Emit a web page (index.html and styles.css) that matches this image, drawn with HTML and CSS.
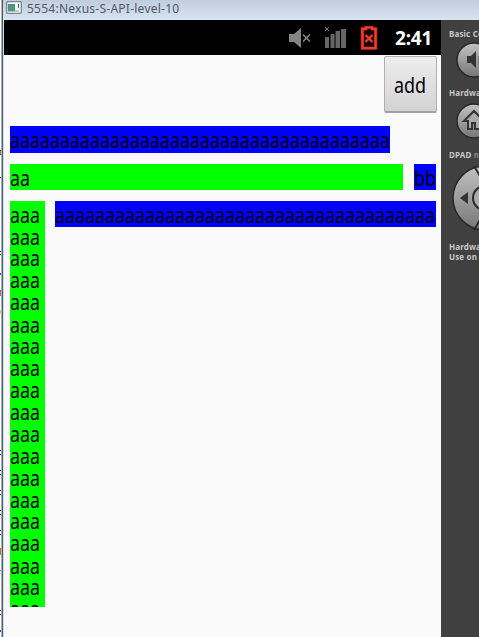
FILE: index.html
```html
<!DOCTYPE html>
<html lang="en"><head><meta charset="utf-8"><title>5554:Nexus-S-API-level-10</title><link rel="stylesheet" href="styles.css"></head>
<body>
<div class="desktop">
  <svg class="behind" width="2" height="637"><path stroke="#222" stroke-width="1" d="M0 177.500h1M0 251.500h1M0 254.500h1M0 450.500h1M0 454.500h1M0 470.500h1M0 474.500h1M0 490.500h1M0 494.500h1M0 510.500h1M0 514.500h1M0 530.500h1M0 534.500h1M0 610.500h1M0 614.500h1"/><path fill="#c87800" d="M0 151h1v4H0zM0 548h1v7H0z"/><path fill="#2459a8" d="M0 150h1v1H0zM0 154h1v1H0zM0 273h1v2H0zM0 630h1v2H0z"/><path fill="#a87068" d="M0 290h1v6H0zM0 570h1v1H0z"/><path fill="#eec56a" d="M0 310h1v4H0z"/><path fill="#a9b7c5" d="M1 0h1v637H1z"/></svg>
  <div class="window">
    <header class="titlebar">
      <svg width="16" height="13" viewBox="0 0 16 13"><rect x=".7" y=".7" width="14.600" height="11.600" rx="1" fill="#f8f8f5" stroke="#7b858c" stroke-width="1.300"/><rect x="2" y="3" width="7" height="7.500" fill="#4f9880"/><path d="M2 3h4L2 8z" fill="#5687a4"/><path d="M12.500 3v4" stroke="#286b67"/><path d="M9 10h4" stroke="#ccc" stroke-width="2"/></svg>
      <span class="title">5554:Nexus-S-API-level-10</span>
    </header>
    <div class="emulator">
      <main class="screen">
        <div class="status">
          <svg class="sound" width="24" height="22" viewBox="0 0 24 22"><path fill="#858585" d="M1 7h5l7-6v20l-7-6H1z"/><path d="M15 7.500l7 7m0-7l-7 7" stroke="#858585" stroke-width="1.700"/></svg>
          <svg class="signal" width="22" height="22" viewBox="0 0 22 22"><path fill="#666" d="M1 11h4v11H1zM6.500 8h4v14h-4zM11.500 5h4.500v17h-4.500zM17 3h5v19h-5z"/><path d="M1 1l4 4m0-4L1 5" stroke="#777"/></svg>
          <svg class="battery" width="18" height="24" viewBox="0 0 18 24"><path d="M6 3V1.500h6V3h3.500v19h-13V3z" fill="none" stroke="#6b170d" stroke-width="4"/><path d="M6 3V1.500h6V3h3.500v19h-13V3z" fill="#160300" stroke="#f23c25" stroke-width="2.600"/><path d="M5.500 9l7 7m0-7l-7 7" stroke="#f23c25" stroke-width="2.400"/></svg>
          <span class="clock">2:41</span>
        </div>
        <div class="actions"><button class="add"><span class="tall">add</span></button></div>
        <div class="rows">
          <div class="row first"><div class="cell blue wide"><span class="tall">aaaaaaaaaaaaaaaaaaaaaaaaaaaaaaaaaaaaaa</span></div></div>
          <div class="row"><div class="cell green grow"><span class="tall">aa</span></div><div class="cell blue pair"><span class="tall">bb</span></div></div>
          <div class="row last"><div class="cell green column"><span class="tall">aaa<br>aaa<br>aaa<br>aaa<br>aaa<br>aaa<br>aaa<br>aaa<br>aaa<br>aaa<br>aaa<br>aaa<br>aaa<br>aaa<br>aaa<br>aaa<br>aaa<br>aaa<br>aaa</span></div><div class="cell blue full"><span class="tall">aaaaaaaaaaaaaaaaaaaaaaaaaaaaaaaaaaaaaa</span></div></div>
        </div>
      </main>
      <aside class="controls">
        <p class="label">Basic Controls</p>
        <svg class="knob" width="36" height="36" viewBox="0 0 36 36"><defs><linearGradient id="metal" x2="0" y2="1"><stop stop-color="#c2c2c2"/><stop offset="1" stop-color="#777"/></linearGradient></defs><circle cx="18" cy="18" r="17" fill="url(#metal)" stroke="#292929" stroke-width="1.500"/><path d="M11 14h4l5-5v17l-5-5h-4z" fill="#333"/><path d="M23 14v7" stroke="#555"/></svg>
        <p class="label hardware">Hardware Buttons</p>
        <svg class="knob" width="36" height="36" viewBox="0 0 36 36"><circle cx="18" cy="18" r="17" fill="url(#metal)" stroke="#292929" stroke-width="1.500"/><path d="M8 18L18 8l10 10h-4v8h-5v-6h-3v6h-4v-8z" fill="#aaa" stroke="#333" stroke-width="2"/></svg>
        <p class="label dpad">DPAD <span class="dim">not enabled</span></p>
        <svg class="pad" width="66" height="66" viewBox="0 0 66 66"><circle cx="33" cy="33" r="32" fill="url(#metal)" stroke="#292929" stroke-width="1.500"/><path d="M22 1l12 20M22 65l12-20" stroke="#292929" stroke-width="2" fill="none"/><circle cx="33" cy="33" r="12" fill="#aaa" stroke="#292929" stroke-width="2"/><path d="M8 33l8-6v12z" fill="#333"/></svg>
        <p class="label note">Hardware Keyboard<br>Use on your</p>
      </aside>
    </div>
  </div>
</div>
</body></html>
```
FILE: styles.css
```css
* { box-sizing: border-box; }
body { margin: 0; overflow: hidden; background: #fff; font-family: "Noto Sans", sans-serif; }
.desktop { display: flex; width: 479px; height: 637px; overflow: hidden; }
.behind { flex: none; background: #fff; }
.window { flex: 1; min-width: 0; border-left: 1px solid #4d5965; background: #d0dfed; }
.titlebar { display: flex; height: 20px; padding: 1px 0 0 3px; gap: 5px; background: linear-gradient(#bfcddd, #d7e4f1); }
.titlebar svg { flex: none; }
.title { font-size: 12px; line-height: 15px; letter-spacing: .25px; color: #4d5968; white-space: nowrap; }
.emulator { display: flex; height: 617px; padding-left: 1px; overflow: hidden; }
.screen { flex: none; width: 437px; background: #fafafa; }
.status { display: flex; height: 35px; background: #000; padding-left: 284px; }
.status svg { flex: none; }
.sound { margin-top: 7px; }
.signal { margin: 6px 0 0 12px; }
.battery { margin: 6px 0 0 14px; }
.clock { margin-left: 17px; color: #fff; font: bold 19px/37px "Noto Sans", sans-serif; letter-spacing: -.2px; }
.actions { display: flex; justify-content: flex-end; height: 59px; padding: 1px 4px 0 0; }
.add { width: 53px; height: 57px; padding: 0 1px 3px 0; border: 1px solid #b0b0b0; border-bottom: 2px solid #a2a2a2; border-radius: 2px; background: linear-gradient(#ededed, #d2d2d2); font: 17.9px/22px "Noto Sans", sans-serif; color: #000; }
.tall { display: block; transform: scaleY(1.17); transform-origin: 0 0; white-space: nowrap; }
.rows { display: flex; flex-direction: column; gap: 11px; padding: 12px 5px 0 6px; }
.row { display: flex; align-items: flex-start; gap: 11px; }
.last { gap: 10px; }
.cell { height: 26px; overflow: hidden; font-size: 17.83px; line-height: 18.73px; padding: 2.5px 0 0; color: #000; }
.blue { background: #00f; color: #000; }
.green { background: #0f0; }
.wide { width: 380px; height: 27px; padding-top: 3px; }
.grow { flex: 1; }
.pair { width: 22px; }
.column { width: 35px; height: 406px; padding-top: 3px; }
.full { width: 381px; }
.controls { flex: none; width: 120px; padding: 9px 0 0 8px; background: #404040; }
.label { margin: 0; color: #c8c8c8; font: bold 8px/10px "Noto Sans", sans-serif; letter-spacing: .15px; white-space: nowrap; }
.knob, .pad { display: block; }
.knob { margin: 3px 0 0 7px; }
.hardware { margin-top: 10px; }
.hardware + .knob { margin-top: 5px; }
.dpad { margin-top: 11px; }
.dim { color: #888; }
.pad { margin: 5px 0 0 3px; }
.note { margin-top: 11px; }
```
